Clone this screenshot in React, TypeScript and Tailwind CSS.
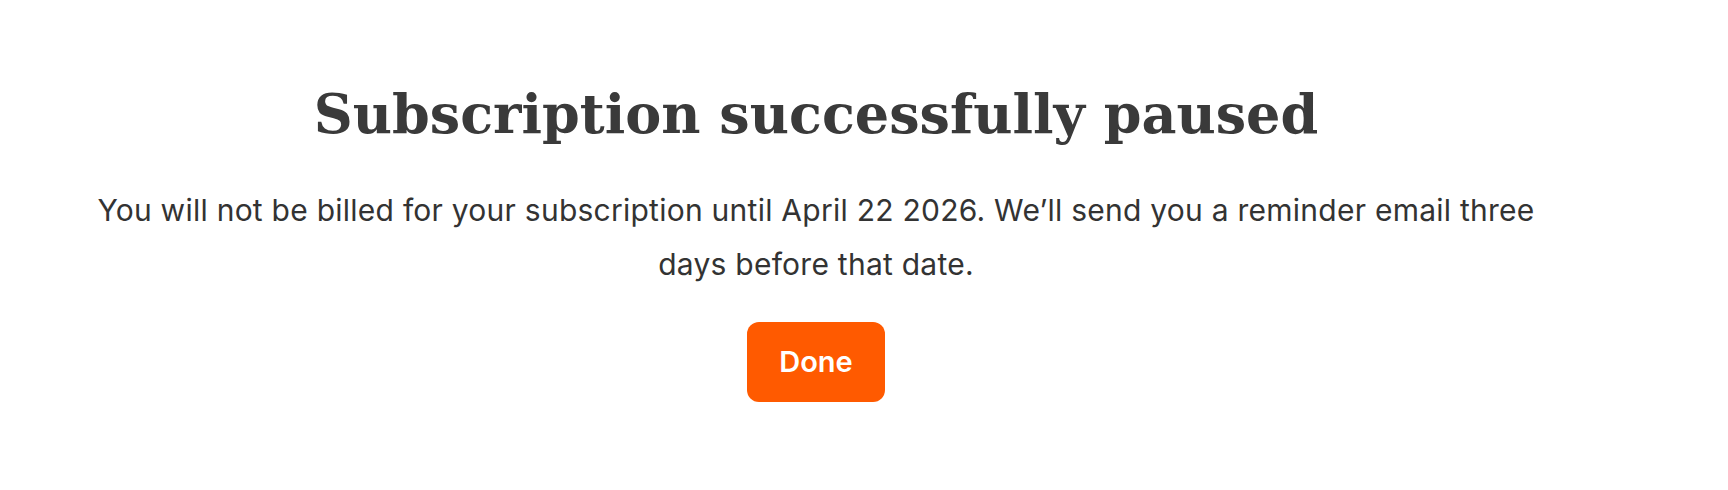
export default function App() {
  return (
    <div className="min-h-[490px] bg-white">
      <div className="w-[1632px] flex flex-col items-center pt-[74px]">
        <h1 className="text-[54px] leading-[80px] font-bold text-[#3a3a3a] font-['DejaVu_Serif',serif]">
          Subscription successfully paused
        </h1>
        <p className="mt-[29px] max-w-[1470px] text-center text-[30px] leading-[54px] tracking-[0.25px] text-[#333333] font-['Inter',sans-serif]">
          You will not be billed for your subscription until April 22 2026. We’ll send you a reminder email three days
          before that date.
        </p>
        <button className="mt-[31px] w-[138px] h-[80px] rounded-[12px] bg-[#ff5a00] text-white text-[29px] font-semibold font-['Inter',sans-serif]">
          Done
        </button>
      </div>
    </div>
  );
}
